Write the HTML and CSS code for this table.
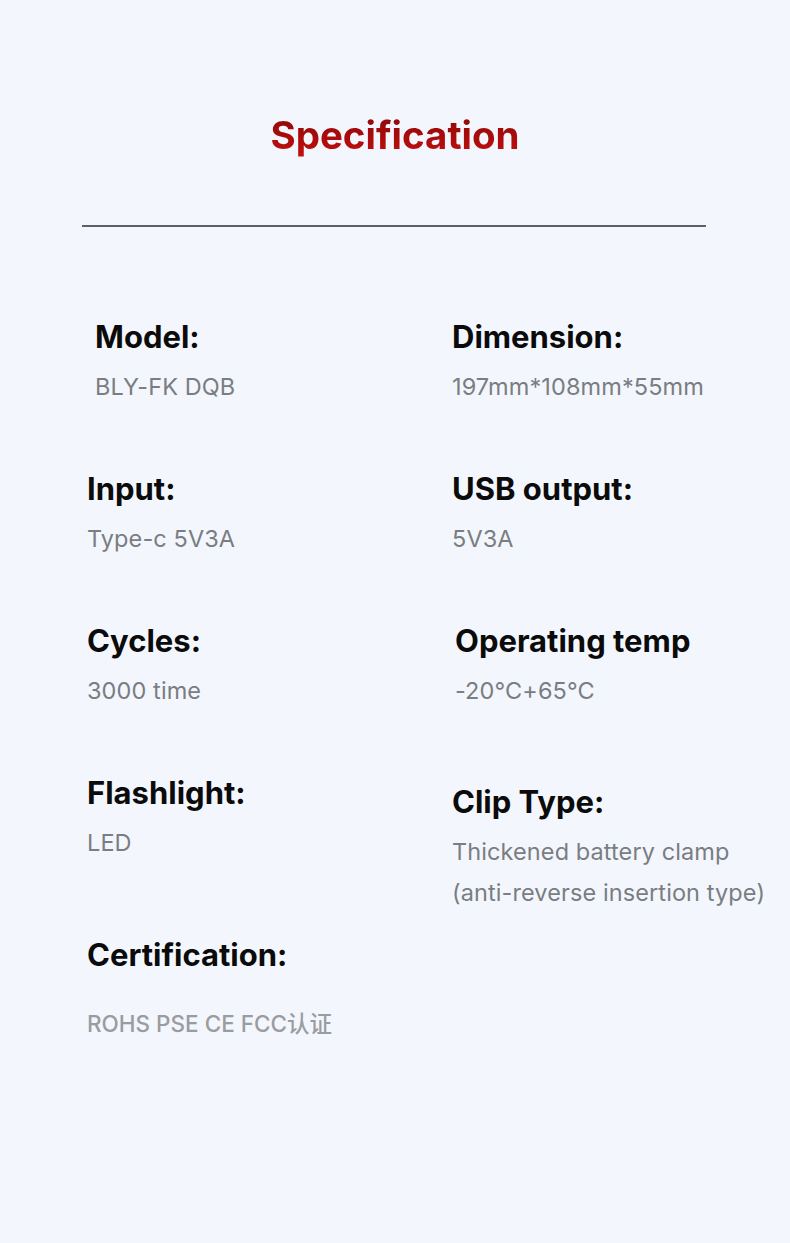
FILE: index.html
```html
<!DOCTYPE html>
<html>
<head>
<meta charset="utf-8">
<link rel="stylesheet" href="styles.css">
</head>
<body>
<div class="page">
  <h1 class="title">Specification</h1>
  <div class="rule"></div>
  <div class="specs">
    <div class="row">
      <div class="cell shift-model">
        <div class="label">Model:</div>
        <div class="value">BLY-FK DQB</div>
      </div>
      <div class="cell right">
        <div class="label">Dimension:</div>
        <div class="value">197mm*108mm*55mm</div>
      </div>
    </div>
    <div class="row">
      <div class="cell">
        <div class="label">Input:</div>
        <div class="value">Type-c 5V3A</div>
      </div>
      <div class="cell right">
        <div class="label">USB output:</div>
        <div class="value">5V3A</div>
      </div>
    </div>
    <div class="row">
      <div class="cell">
        <div class="label">Cycles:</div>
        <div class="value">3000 time</div>
      </div>
      <div class="cell right shift-temp">
        <div class="label">Operating temp</div>
        <div class="value">-20°C+65°C</div>
      </div>
    </div>
    <div class="row">
      <div class="cell">
        <div class="label">Flashlight:</div>
        <div class="value">LED</div>
      </div>
      <div class="cell right drop">
        <div class="label">Clip Type:</div>
        <div class="value">Thickened battery clamp<br>(anti-reverse insertion type)</div>
      </div>
    </div>
    <div class="row cert">
      <div class="cell">
        <div class="label">Certification:</div>
        <div class="value cert-value">ROHS PSE CE FCC认证</div>
      </div>
    </div>
  </div>
</div>
</body>
</html>
```

FILE: styles.css
```css
html, body {
  margin: 0;
  padding: 0;
  background: #f3f7fd;
}
.page {
  width: 790px;
  height: 1243px;
  font-family: Inter, "Noto Sans", "Noto Sans CJK SC", sans-serif;
  padding-top: 110px;
  box-sizing: border-box;
}
.title {
  margin: 0;
  text-align: center;
  font-size: 38.5px;
  line-height: 50px;
  font-weight: 700;
  letter-spacing: 0;
  background: linear-gradient(180deg, #860808 0%, #a80b0b 50%, #c81010 100%);
  -webkit-background-clip: text;
  background-clip: text;
  color: transparent;
  width: 260px;
  margin-left: 265px;
}
.rule {
  margin-top: 65px;
  margin-left: 82px;
  width: 624px;
  height: 1.5px;
  background: #5b5f66;
}
.specs {
  margin-top: 90px;
  padding-left: 87px;
}
.row {
  display: flex;
  height: 152px;
}
.row.cert {
  height: auto;
  margin-top: 10px;
}
.cell {
  width: 365px;
}
.cell.right {
  width: auto;
}
.shift-model {
  padding-left: 8px;
  width: 357px;
}
.shift-temp {
  padding-left: 3px;
}
.drop {
  padding-top: 9px;
}
.label {
  font-size: 31px;
  line-height: 40px;
  font-weight: 700;
  color: #0b0b0b;
  letter-spacing: 0;
}
.value {
  margin-top: 9px;
  font-size: 23.5px;
  line-height: 41px;
  color: #7a7d82;
  font-weight: 400;
  letter-spacing: 0.1px;
}
.cert-value {
  margin-top: 28px;
  font-size: 22.5px;
  color: #9a9ca0;
  font-weight: 500;
  letter-spacing: 0;
}
```
